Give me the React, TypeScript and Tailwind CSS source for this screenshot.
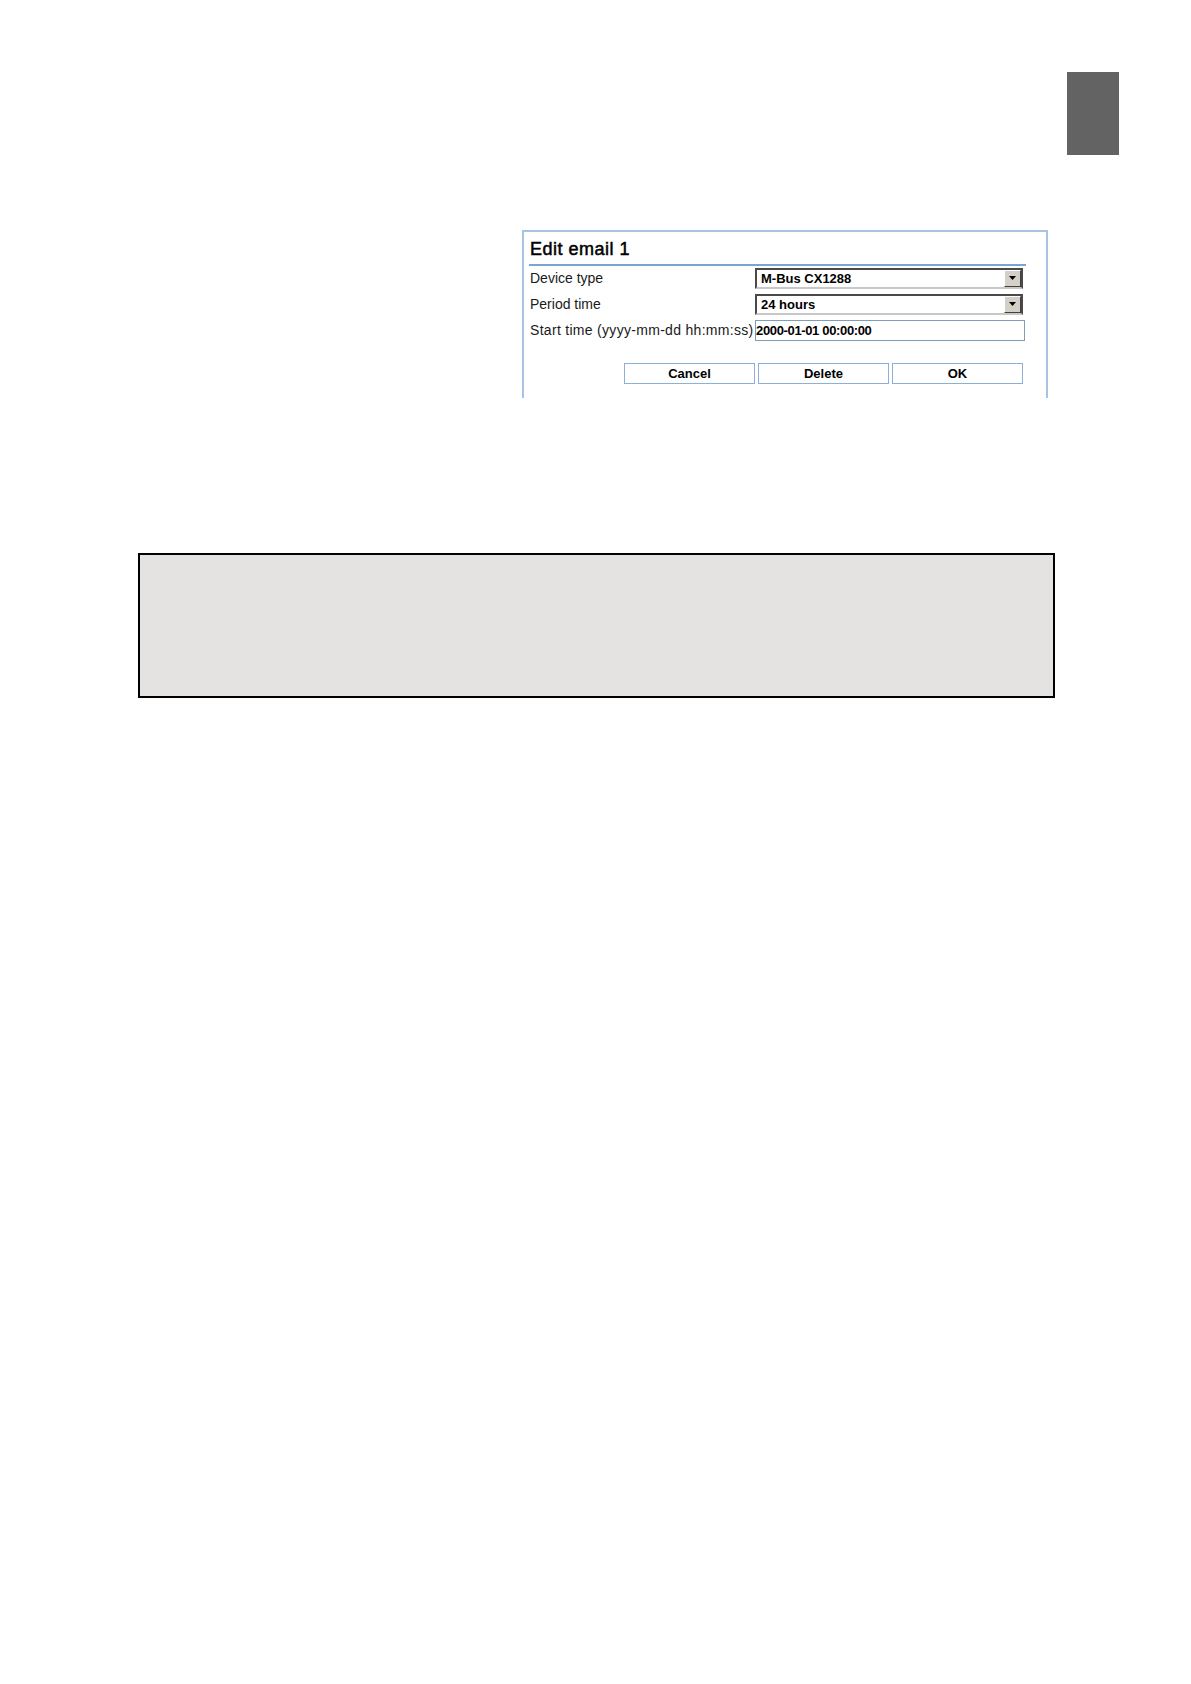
import React from "react";

const sans = { fontFamily: '"Liberation Sans", Arial, sans-serif' } as React.CSSProperties;

function Select({ value }: { value: string }) {
  return (
    <div className="flex h-[21px] w-[268px] border-2 border-t-[#4a4a4a] border-l-[#4a4a4a] border-b-[#c8c8c8] border-r-[#4a4a4a] bg-white">
      <div className="flex flex-1 items-center pl-[4px] text-[13px] font-bold leading-none text-black">
        {value}
      </div>
      <div className="flex w-[17px] items-center justify-center border border-t-white border-l-white border-b-[#404040] border-r-[#404040] bg-[#d4d0c8]">
        <svg width="8" height="5" viewBox="0 0 8 5">
          <path d="M0 0 H7 L3.5 4 Z" fill="#000" />
        </svg>
      </div>
    </div>
  );
}

export default function App() {
  return (
    <div className="min-h-[1684px] w-[1191px] bg-white pt-[72px]" style={sans}>
      <div className="flex justify-end pr-[72px]">
        <div className="h-[83px] w-[52px] bg-[#636363]" />
      </div>

      <div className="ml-[522px] mt-[75px] h-[168px] w-[526px] border-x-2 border-t-2 border-[#a9c3e3] pl-[5px] pr-[20px] pt-[6px]">
        <div className="pl-[1px] text-[18px] leading-[22px] tracking-[0.5px] text-black [-webkit-text-stroke:0.5px_black]">
          Edit email 1
        </div>
        <div className="mt-[4px] h-[2px] w-[497px] bg-[#7ea3d1]" />
        <div className="mt-[2px] flex items-center">
          <div className="w-[226px] whitespace-nowrap pl-[1px] text-[14px] text-[#1a1a1a]">Device type</div>
          <Select value="M-Bus CX1288" />
        </div>
        <div className="mt-[5px] flex items-center">
          <div className="w-[226px] whitespace-nowrap pl-[1px] text-[14px] text-[#1a1a1a]">Period time</div>
          <Select value="24 hours" />
        </div>
        <div className="mt-[5px] flex items-center">
          <div className="w-[226px] whitespace-nowrap pl-[1px] text-[14px] tracking-[0.3px] text-[#1a1a1a]">
            Start time (yyyy-mm-dd hh:mm:ss)
          </div>
          <div className="flex h-[21px] w-[270px] items-center border border-[#7f9db9] bg-white text-[13px] font-bold tracking-[-0.35px] text-black">
            2000-01-01 00:00:00
          </div>
        </div>
        <div className="ml-[95px] mt-[22px] flex gap-[3px]">
          {["Cancel", "Delete", "OK"].map((t) => (
            <div
              key={t}
              className="flex h-[21px] w-[131px] items-center justify-center border border-[#8fb0d6] bg-white text-[13px] font-bold text-black"
            >
              {t}
            </div>
          ))}
        </div>
      </div>

      <div className="ml-[138px] mt-[155px] h-[145px] w-[917px] border-[2.5px] border-black bg-[#e5e3e1]" />
    </div>
  );
}
